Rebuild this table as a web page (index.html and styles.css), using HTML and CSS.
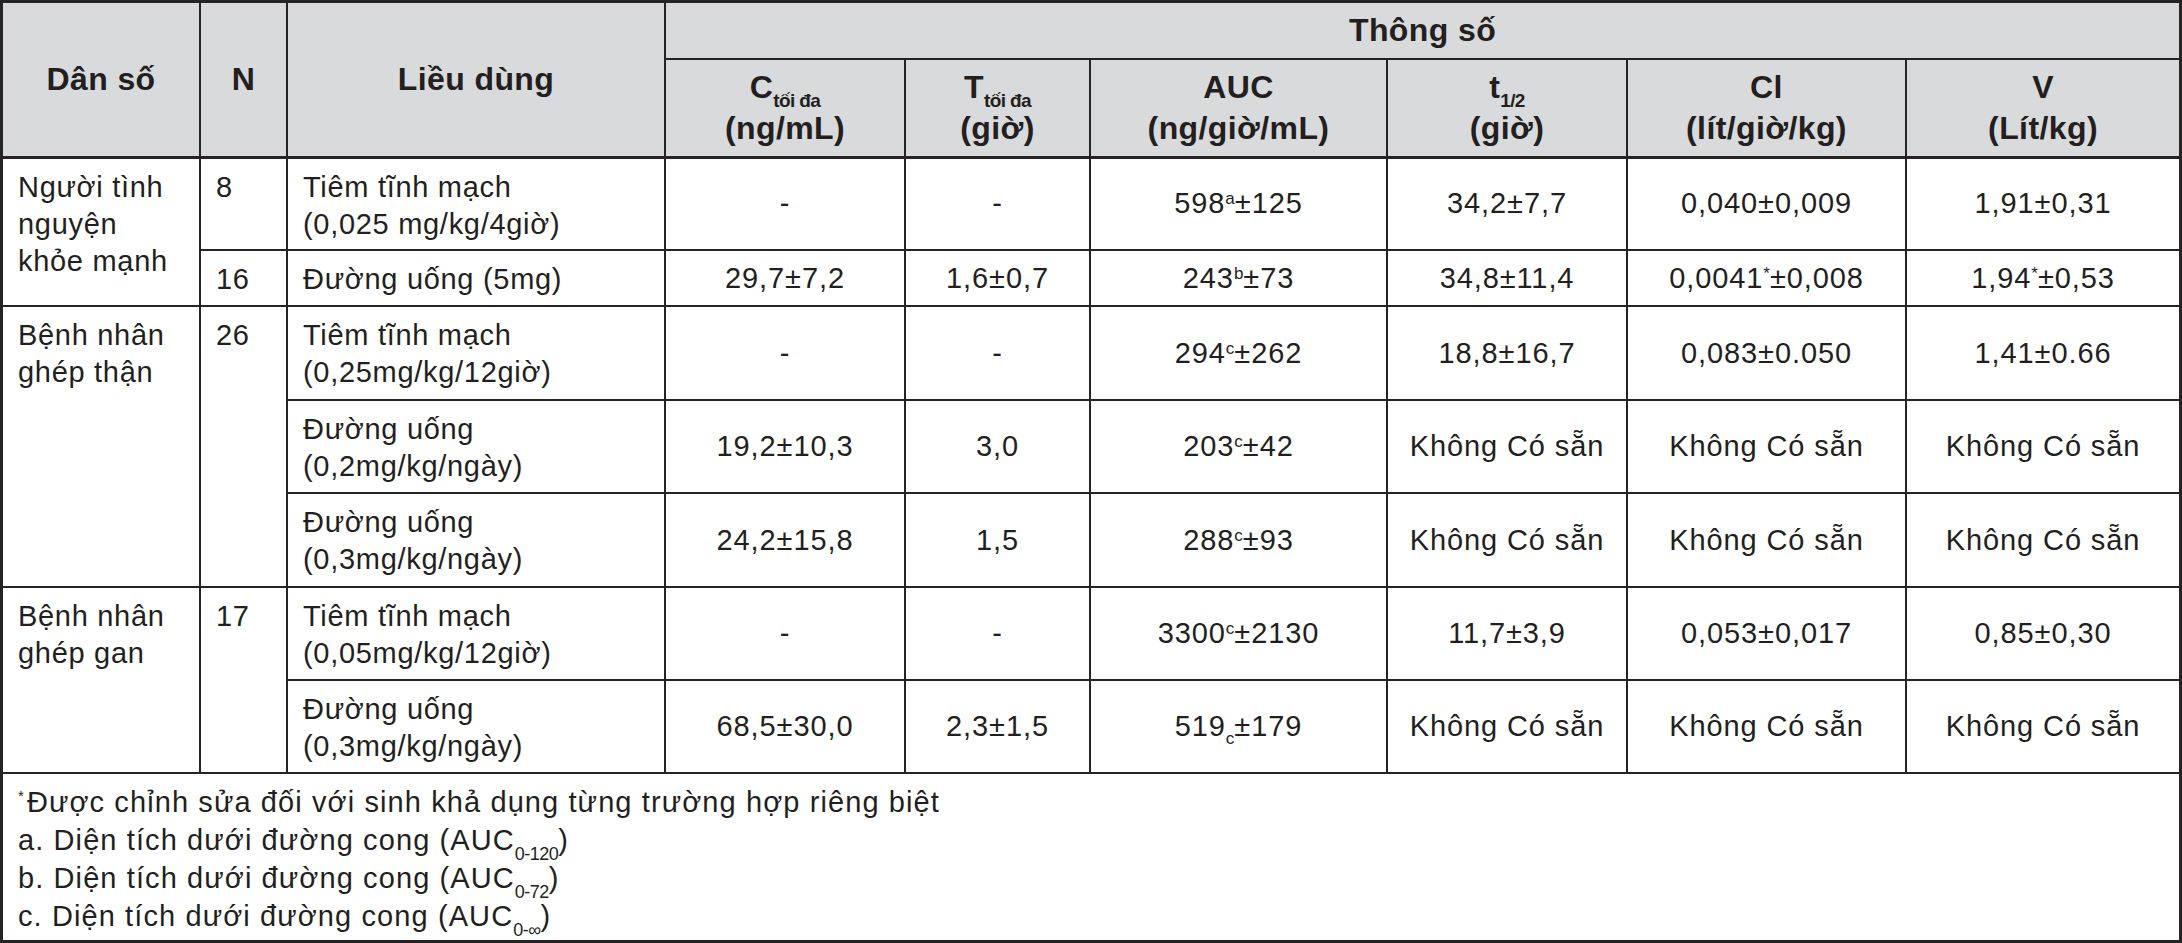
FILE: index.html
```html
<!DOCTYPE html>
<html lang="vi">
<head>
<meta charset="utf-8">
<title>Thông số dược động học</title>
<link rel="stylesheet" href="styles.css">
</head>
<body>
<div class="frame">
<table class="pk">
  <colgroup>
    <col class="c1"><col class="c2"><col class="c3"><col class="c4"><col class="c5"><col class="c6"><col class="c7"><col class="c8"><col class="c9">
  </colgroup>
  <thead>
    <tr class="h1">
      <th rowspan="2">Dân số</th>
      <th rowspan="2">N</th>
      <th rowspan="2">Liều dùng</th>
      <th colspan="6" class="group">Thông số</th>
    </tr>
    <tr class="h2">
      <th><span class="hl">C<sub class="hs">tối đa</sub></span><span class="hl">(ng/mL)</span></th>
      <th><span class="hl">T<sub class="hs">tối đa</sub></span><span class="hl">(giờ)</span></th>
      <th><span class="hl">AUC</span><span class="hl">(ng/giờ/mL)</span></th>
      <th><span class="hl">t<sub class="hs">1/2</sub></span><span class="hl">(giờ)</span></th>
      <th><span class="hl">Cl</span><span class="hl">(lít/giờ/kg)</span></th>
      <th><span class="hl">V</span><span class="hl">(Lít/kg)</span></th>
    </tr>
  </thead>
  <tbody>
    <tr class="r93">
      <td rowspan="2" class="txt">Người tình<br>nguyện<br>khỏe mạnh</td>
      <td class="txt">8</td>
      <td class="txt">Tiêm tĩnh mạch<br>(0,025 mg/kg/4giờ)</td>
      <td class="num">-</td>
      <td class="num">-</td>
      <td class="num">598<sup class="ns">a</sup>±125</td>
      <td class="num">34,2±7,7</td>
      <td class="num">0,040±0,009</td>
      <td class="num">1,91±0,31</td>
    </tr>
    <tr class="r56">
      <td class="txt">16</td>
      <td class="txt">Đường uống (5mg)</td>
      <td class="num">29,7±7,2</td>
      <td class="num">1,6±0,7</td>
      <td class="num">243<sup class="ns">b</sup>±73</td>
      <td class="num">34,8±11,4</td>
      <td class="num">0,0041<sup class="ns">*</sup>±0,008</td>
      <td class="num">1,94<sup class="ns">*</sup>±0,53</td>
    </tr>
    <tr class="r94">
      <td rowspan="3" class="txt">Bệnh nhân<br>ghép thận</td>
      <td rowspan="3" class="txt">26</td>
      <td class="txt">Tiêm tĩnh mạch<br>(0,25mg/kg/12giờ)</td>
      <td class="num">-</td>
      <td class="num">-</td>
      <td class="num">294<sup class="ns">c</sup>±262</td>
      <td class="num">18,8±16,7</td>
      <td class="num">0,083±0.050</td>
      <td class="num">1,41±0.66</td>
    </tr>
    <tr class="r93">
      <td class="txt">Đường uống<br>(0,2mg/kg/ngày)</td>
      <td class="num">19,2±10,3</td>
      <td class="num">3,0</td>
      <td class="num">203<sup class="ns">c</sup>±42</td>
      <td class="num">Không Có sẵn</td>
      <td class="num">Không Có sẵn</td>
      <td class="num">Không Có sẵn</td>
    </tr>
    <tr class="r94">
      <td class="txt">Đường uống<br>(0,3mg/kg/ngày)</td>
      <td class="num">24,2±15,8</td>
      <td class="num">1,5</td>
      <td class="num">288<sup class="ns">c</sup>±93</td>
      <td class="num">Không Có sẵn</td>
      <td class="num">Không Có sẵn</td>
      <td class="num">Không Có sẵn</td>
    </tr>
    <tr class="r93">
      <td rowspan="2" class="txt">Bệnh nhân<br>ghép gan</td>
      <td rowspan="2" class="txt">17</td>
      <td class="txt">Tiêm tĩnh mạch<br>(0,05mg/kg/12giờ)</td>
      <td class="num">-</td>
      <td class="num">-</td>
      <td class="num">3300<sup class="ns">c</sup>±2130</td>
      <td class="num">11,7±3,9</td>
      <td class="num">0,053±0,017</td>
      <td class="num">0,85±0,30</td>
    </tr>
    <tr class="r93">
      <td class="txt">Đường uống<br>(0,3mg/kg/ngày)</td>
      <td class="num">68,5±30,0</td>
      <td class="num">2,3±1,5</td>
      <td class="num">519<sub class="nb">c</sub>±179</td>
      <td class="num">Không Có sẵn</td>
      <td class="num">Không Có sẵn</td>
      <td class="num">Không Có sẵn</td>
    </tr>
  </tbody>
  <tfoot>
    <tr class="rf">
      <td colspan="9" class="notes">
        <p class="note"><sup class="fs">*</sup>Được chỉnh sửa đối với sinh khả dụng từng trường hợp riêng biệt</p>
        <p class="note">a. Diện tích dưới đường cong (AUC<sub class="fb">0-120</sub>)</p>
        <p class="note">b. Diện tích dưới đường cong (AUC<sub class="fb">0-72</sub>)</p>
        <p class="note">c. Diện tích dưới đường cong (AUC<sub class="fb">0-∞</sub>)</p>
      </td>
    </tr>
  </tfoot>
</table>
</div>
</body>
</html>
```
FILE: styles.css
```css
html, body {
  margin: 0;
  padding: 0;
  background: #ffffff;
}
body {
  width: 2182px;
  height: 943px;
  overflow: hidden;
  font-family: "Liberation Sans", Arial, Helvetica, sans-serif;
  color: #231f20;
}
.frame {
  box-sizing: border-box;
  width: 2182px;
  height: 943px;
  border: 3px solid #262324;
  overflow: hidden;
}
.pk {
  border-collapse: collapse;
  table-layout: fixed;
  width: 2176px;
  height: 937px;
  border-style: hidden;
}
.c1 { width: 197px; }
.c2 { width: 87px; }
.c3 { width: 378px; }
.c4 { width: 240px; }
.c5 { width: 185px; }
.c6 { width: 297px; }
.c7 { width: 240px; }
.c8 { width: 279px; }
.c9 { width: 273px; }

.pk th, .pk td {
  border: 2px solid #262324;
  padding: 0;
}
.pk th {
  background: #d9dadb;
  font-weight: bold;
  font-size: 32px;
  letter-spacing: 0.4px;
  text-align: center;
  vertical-align: middle;
  line-height: 41px;
}
.pk thead tr.h2 th {
  border-bottom-width: 3px;
}
.pk thead tr.h1 th[rowspan] {
  border-bottom-width: 3px;
}
.h1 { height: 56px; }
.h2 { height: 98px; }
.hl { display: block; }
.hs {
  font-size: 19px;
  letter-spacing: -0.6px;
  vertical-align: -9px;
  line-height: 0;
}

.r93 { height: 93px; }
.r94 { height: 94px; }
.r56 { height: 56px; }
.rf { height: 166px; }

.pk td {
  font-size: 29px;
  letter-spacing: 0.7px;
}
.txt {
  text-align: left;
  vertical-align: top;
  padding: 10px 8px 0 15px !important;
  line-height: 37px;
}
.num {
  text-align: center;
  vertical-align: middle;
  line-height: 37px;
}
.pk td.num {
  letter-spacing: 0.9px;
}
.ns {
  font-size: 17px;
  letter-spacing: 0;
  vertical-align: 9px;
  line-height: 0;
}
.nb {
  font-size: 17px;
  letter-spacing: 0;
  vertical-align: -8px;
  line-height: 0;
}
.pk td.notes {
  padding: 9px 15px 6px 15px;
  vertical-align: top;
  letter-spacing: 1.1px;
}
.note {
  margin: 0;
  line-height: 38px;
}
.fs {
  font-size: 15px;
  vertical-align: 11px;
  line-height: 0;
  margin-right: 2px;
}
.fb {
  font-size: 18px;
  letter-spacing: -0.5px;
  vertical-align: -10px;
  line-height: 0;
}
```
